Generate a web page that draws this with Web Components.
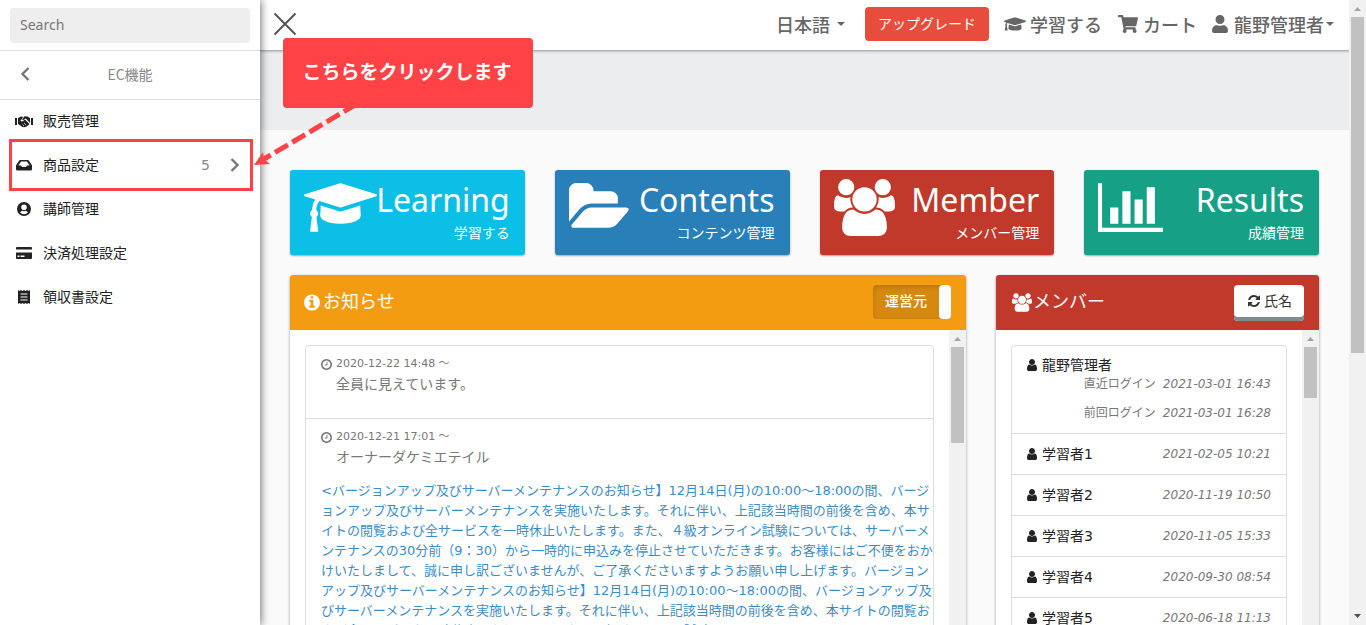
<!DOCTYPE html>
<html lang="ja">
<head>
<meta charset="UTF-8">
<meta name="viewport" content="width=device-width, initial-scale=1">
<title>EC機能</title>
<style>
  body {
    margin: 0;
    height: 100vh;
    overflow: hidden;
    background: #fafafa;
    color: #777;
    font-family: "DejaVu Sans", "Noto Sans CJK JP", sans-serif;
    font-size: 14px;
    line-height: 20px;
  }
</style>
</head>
<body>
<app-shell>
  <side-menu slot="side" heading="EC機能">
    <menu-entry icon="handshake">販売管理</menu-entry>
    <menu-entry icon="inbox" count="5" marked>商品設定</menu-entry>
    <menu-entry icon="account">講師管理</menu-entry>
    <menu-entry icon="card">決済処理設定</menu-entry>
    <menu-entry icon="receipt">領収書設定</menu-entry>
  </side-menu>

  <top-bar slot="top"></top-bar>

  <stat-card slot="cards" icon="cap4" color="#0cbfe6" heading="Learning">学習する</stat-card>
  <stat-card slot="cards" icon="folder" color="#2980b9" heading="Contents">コンテンツ管理</stat-card>
  <stat-card slot="cards" icon="users" color="#c0392b" heading="Member">メンバー管理</stat-card>
  <stat-card slot="cards" icon="chart" color="#16a085" heading="Results">成績管理</stat-card>

  <panel-box slot="news" icon="info" color="#f39c12" heading="お知らせ" thumb="96">
    <toggle-switch slot="action">運営元</toggle-switch>
    <notice-item date="2020-12-22 14:48 ～" heading="全員に見えています。"></notice-item>
    <notice-item date="2020-12-21 17:01 ～" heading="オーナーダケミエテイル">&lt;バージョンアップ及びサーバーメンテナンスのお知らせ】12月14日(月)の10:00～18:00の間、バージ<br>ョンアップ及びサーバーメンテナンスを実施いたします。それに伴い、上記該当時間の前後を含め、本サ<br>イトの閲覧および全サービスを一時休止いたします。また、４級オンライン試験については、サーバーメ<br>ンテナンスの30分前（9：30）から一時的に申込みを停止させていただきます。お客様にはご不便をおか<br>けいたしまして、誠に申し訳ございませんが、ご了承くださいますようお願い申し上げます。バージョン<br>アップ及びサーバーメンテナンスのお知らせ】12月14日(月)の10:00～18:00の間、バージョンアップ及<br>びサーバーメンテナンスを実施いたします。それに伴い、上記該当時間の前後を含め、本サイトの閲覧お<br>よび全サービスを一時休止いたします。また、４級オンライン試験については、サーバーメンテナンス</notice-item>
  </panel-box>

  <panel-box slot="members" icon="users" color="#c0392b" heading="メンバー" thumb="51">
    <sort-button slot="action">氏名</sort-button>
    <member-row name="龍野管理者" last="2021-03-01 16:43" previous="2021-03-01 16:28"></member-row>
    <member-row name="学習者1" last="2021-02-05 10:21"></member-row>
    <member-row name="学習者2" last="2020-11-19 10:50"></member-row>
    <member-row name="学習者3" last="2020-11-05 15:33"></member-row>
    <member-row name="学習者4" last="2020-09-30 08:54"></member-row>
    <member-row name="学習者5" last="2020-06-18 11:13"></member-row>
  </panel-box>

  <click-hint slot="hint">こちらをクリックします</click-hint>
</app-shell>

<script>
const ICONS = {
  cap4: ['0 0 2304 1792', '<path d="M1774 836l18 316q4 69-82 128t-235 93.5-323 34.5-323-34.5-235-93.5-82-128l18-316 574 181q22 7 48 7t48-7zm530-324q0 23-22 31l-1120 352q-4 1-10 1t-10-1l-652-206q-43 34-71 111.5t-34 178.5q63 36 63 109 0 69-58 107l58 433q2 14-8 25-9 11-24 11h-192q-15 0-24-11-10-11-8-25l58-433q-58-38-58-107 0-73 65-111 11-207 98-330l-333-104q-22-8-22-31t22-31l1120-352q4-1 10-1t10 1l1120 352q22 8 22 31z"/>'],
  folder: ['0 0 1920 1792', '<path d="M1879 952q0 31-31 66l-336 396q-43 51-120.5 86.5t-143.5 35.5h-1088q-34 0-60.5-13t-26.5-43q0-31 31-66l336-396q43-51 120.5-86.5t143.5-35.5h1088q34 0 60.5 13t26.5 43zm-343-344v160h-832q-94 0-197 47.5t-164 119.5l-337 396-5 6q0-4-.5-12.5t-.5-12.5v-960q0-92 66-158t158-66h320q92 0 158 66t66 158v32h544q92 0 158 66t66 158z"/>'],
  users: ['0 0 1920 1792', '<path d="M593 896q-162 5-265 128h-134q-82 0-138-40.5t-56-118.5q0-353 124-353 6 0 43.5 21t97.5 42.5 119 21.5q67 0 133-23-5 37-5 66 0 139 81 256zm1071 637q0 120-73 189.5t-194 69.5h-874q-121 0-194-69.5t-73-189.5q0-53 3.5-103.5t14-109 26.5-108.5 43-97.5 62-81 85.5-53.5 111.5-20q10 0 43 21.5t73 48 107 48 135 21.5 135-21.5 107-48 73-48 43-21.5q61 0 111.5 20t85.5 53.5 62 81 43 97.5 26.5 108.5 14 109 3.5 103.5zm-1024-1277q0 106-75 181t-181 75-181-75-75-181 75-181 181-75 181 75 75 181zm704 384q0 159-112.5 271.5t-271.5 112.5-271.5-112.5-112.5-271.5 112.5-271.5 271.5-112.5 271.5 112.5 112.5 271.5zm576 225q0 78-56 118.5t-138 40.5h-134q-103-123-265-128 81-117 81-256 0-29-5-66 66 23 133 23 59 0 119-21.5t97.5-42.5 43.5-21q124 0 124 353zm-128-609q0 106-75 181t-181 75-181-75-75-181 75-181 181-75 181 75 75 181z"/>'],
  chart: ['0 0 2048 1792', '<path d="M640 896v512h-256v-512h256zm384-512v1024h-256v-1024h256zm1024 1152v128h-2048v-1536h128v1408h1920zm-640-896v768h-256v-768h256zm384-384v1152h-256v-1152h256z"/>'],
  info: ['128 128 1536 1536', '<path d="M1152 1376v-160q0-14-9-23t-23-9h-96v-512q0-14-9-23t-23-9h-320q-14 0-23 9t-9 23v160q0 14 9 23t23 9h96v320h-96q-14 0-23 9t-9 23v160q0 14 9 23t23 9h448q14 0 23-9t9-23zm-128-896v-160q0-14-9-23t-23-9h-192q-14 0-23 9t-9 23v160q0 14 9 23t23 9h192q14 0 23-9t9-23zm640 416q0 209-103 385.5t-279.5 279.5-385.5 103-385.5-103-279.5-279.5-103-385.5 103-385.5 279.5-279.5 385.5-103 385.5 103 279.5 279.5 103 385.5z"/>'],
  clock: ['128 128 1536 1536', '<path d="M1024 544v448q0 14-9 23t-23 9h-320q-14 0-23-9t-9-23v-64q0-14 9-23t23-9h224v-352q0-14 9-23t23-9h64q14 0 23 9t9 23zm416 352q0-148-73-273t-198-198-273-73-273 73-198 198-73 273 73 273 198 198 273 73 273-73 198-198 73-273zm224 0q0 209-103 385.5t-279.5 279.5-385.5 103-385.5-103-279.5-279.5-103-385.5 103-385.5 279.5-279.5 385.5-103 385.5 103 279.5 279.5 103 385.5z"/>'],
  refresh: ['128 128 1536 1536', '<path d="M1639 1056q0 5-1 7-64 268-268 434.5t-478 166.5q-146 0-282.5-55t-243.5-157l-129 129q-19 19-45 19t-45-19-19-45v-448q0-26 19-45t45-19h448q26 0 45 19t19 45-19 45l-137 137q71 66 161 102t187 36q134 0 250-65t186-179q11-17 53-117 8-23 30-23h192q13 0 22.5 9.5t9.5 22.5zm25-800v448q0 26-19 45t-45 19h-448q-26 0-45-19t-19-45 19-45l138-138q-148-137-349-137-134 0-250 65t-186 179q-11 17-53 117-8 23-30 23h-199q-13 0-22.5-9.5t-9.5-22.5v-7q65-268 270-434.5t480-166.5q146 0 284 55.5t245 156.5l130-129q19-19 45-19t45 19 19 45z"/>'],
  person: ['256 128 1280 1536', '<path d="M1536 1399q0 109-62.5 187t-150.5 78h-854q-88 0-150.5-78t-62.5-187q0-85 8.5-160.5t31.5-152 58.5-131 94-89 134.5-34.5q131 128 313 128t313-128q76 0 134.5 34.5t94 89 58.5 131 31.5 152 8.5 160.5zm-256-887q0 159-112.5 271.5t-271.5 112.5-271.5-112.5-112.5-271.5 112.5-271.5 271.5-112.5 271.5 112.5 112.5 271.5z"/>'],
  user: ['0 0 448 512', '<path d="M224 256c70.7 0 128-57.3 128-128S294.7 0 224 0 96 57.3 96 128s57.3 128 128 128zm89.6 32h-16.7c-22.2 10.2-46.9 16-72.9 16s-50.6-5.8-72.9-16h-16.7C60.2 288 0 348.2 0 422.4V464c0 26.5 21.5 48 48 48h352c26.5 0 48-21.5 48-48v-41.6c0-74.2-60.2-134.4-134.4-134.4z"/>'],
  cart: ['0 0 576 512', '<path d="M528.12 301.319l47.273-208C578.806 78.301 567.391 64 551.99 64H159.208l-9.166-44.81C147.758 8.021 137.93 0 126.529 0H24C10.745 0 0 10.745 0 24v16c0 13.255 10.745 24 24 24h69.883l70.248 343.435C147.325 417.1 136 435.222 136 456c0 30.928 25.072 56 56 56s56-25.072 56-56c0-15.674-6.447-29.835-16.824-40h209.647C430.447 426.165 424 440.326 424 456c0 30.928 25.072 56 56 56s56-25.072 56-56c0-22.172-12.888-41.332-31.579-50.405l5.517-24.276c3.413-15.018-8.002-29.319-23.403-29.319H218.117l-6.545-32h293.145c11.206 0 20.92-7.754 23.403-18.681z"/>'],
  cap: ['0 0 640 512', '<path d="M622.34 153.2L343.4 67.5c-15.2-4.67-31.6-4.67-46.79 0L17.66 153.2c-23.54 7.23-23.54 38.36 0 45.59l48.63 14.94c-10.67 13.19-17.23 29.28-17.88 46.9C38.78 266.15 32 276.11 32 288c0 10.78 5.68 19.85 13.86 25.65L20.33 428.53C18.11 438.52 25.71 448 35.94 448h56.11c10.24 0 17.84-9.48 15.62-19.47L82.14 313.65C90.32 307.85 96 298.78 96 288c0-11.57-6.47-21.25-15.66-26.87.76-15.02 8.44-28.3 20.69-36.72L296.6 284.5c9.06 2.78 26.44 6.25 46.79 0l278.95-85.7c23.55-7.24 23.55-38.36 0-45.6zM352.79 315.09c-28.53 8.76-52.84 3.92-65.59 0l-145.02-44.55L128 384c0 35.35 85.96 64 192 64s192-28.65 192-64l-14.18-113.47-145.03 44.56z"/>'],
  handshake: ['0 0 18 14', '<path d="M0 4h2v7H0zM16 4h2v7h-2zM3 4l3-1.5 2.5.5-3 3.500q.8 1.700 3 .2L10 5.500l4.500 4.500-1.500 1.500-1.500 1-2 .8-2-.3L3 10z"/><path d="M9.500 2.200l3 .2L15 4v5l-4.200-4.500L8 6.200l-1-.2zM11 8.500l2 2"/><path d="M9 9l2 2M7.500 10.500l1.500 1.500" stroke="#fff" stroke-width=".7"/>'],
  inbox: ['0 0 16 14', '<path fill-rule="evenodd" d="M4.500 2h7q1 0 1.500.8L16 7.500V11q0 1.500-1.500 1.500h-13Q0 12.500 0 11V7.500l3-4.700Q3.500 2 4.500 2zM5 3.500L2.500 7.500H5l1 1.500h4l1-1.500h2.500L11 3.500z"/>'],
  account: ['0 0 14 14', '<path fill-rule="evenodd" d="M7 0a7 7 0 1 0 0 14A7 7 0 1 0 7 0zM7 2.500a2.800 2.800 0 1 1 0 5.600 2.800 2.800 0 0 1 0-5.600zM3 10.300q1.500-1.500 2.500-1.500 1.500.7 3 0 1 0 2.500 1.500-1.500 2-4 2t-4-2z"/>'],
  card: ['0 0 16 14', '<path fill-rule="evenodd" d="M1 1h14q1 0 1 1v1.500H0V2q0-1 1-1zM0 6.500h16V12q0 1-1 1H1q-1 0-1-1zM1.500 9.500V11h2V9.500zM4.500 9.500V11h4V9.500z"/>'],
  receipt: ['0 0 12 14', '<path fill-rule="evenodd" d="M0 0l1.500 1L3 0l1.500 1L6 0l1.500 1L9 0l1.500 1L12 0v14l-1.500-1L9 14l-1.500-1L6 14l-1.500-1L3 14l-1.500-1L0 14zM2.500 3.500v1h7v-1zM2.500 6.500v1h7v-1zM2.500 9.500v1h7v-1z"/>'],
  left: ['0 0 10 16', '<path d="M8.500 2l-6 6 6 6" fill="none" stroke="currentColor" stroke-width="2.400"/>'],
  right: ['0 0 10 16', '<path d="M1.500 2l6 6-6 6" fill="none" stroke="currentColor" stroke-width="2.400"/>'],
  close: ['0 0 24 24', '<path d="M1.500 1.500l21 21M22.500 1.500l-21 21" fill="none" stroke="currentColor" stroke-width="2"/>'],
  caret: ['0 0 8 4', '<path d="M0 0h8L4 4z"/>']
};

class AppIcon extends HTMLElement {
  constructor() {
    super();
    this.attachShadow({ mode: 'open' });
  }

  connectedCallback() {
    const [box, shape] = ICONS[this.getAttribute('name')];
    this.shadowRoot.innerHTML = `
      <style>
        :host { display: inline-flex; flex: none; width: 14px; height: 14px; }
        svg { width: 100%; height: 100%; fill: currentColor; }
      </style>
      <svg viewBox="${box}" aria-hidden="true">${shape}</svg>
    `;
  }
}
customElements.define('app-icon', AppIcon);

class ScrollTrack extends HTMLElement {
  constructor() {
    super();
    this.attachShadow({ mode: 'open' });
  }

  connectedCallback() {
    this.shadowRoot.innerHTML = `
      <style>
        :host {
          display: flex;
          flex-direction: column;
          align-items: center;
          flex: none;
          width: 17px;
          background: #f1f1f1;
        }
        svg { flex: none; width: 17px; height: 17px; fill: #a3a3a3; }
        .thumb { width: 13px; height: ${this.getAttribute('thumb')}px; background: #c1c1c1; }
        .down { margin-top: auto; fill: #505050; }
      </style>
      <svg viewBox="0 0 17 17"><path d="M5 11h7L8.500 7z"/></svg>
      <div class="thumb"></div>
      <svg class="down" viewBox="0 0 17 17"><path d="M5 6h7l-3.500 4z"/></svg>
    `;
  }
}
customElements.define('scroll-track', ScrollTrack);

class AppShell extends HTMLElement {
  constructor() {
    super();
    this.attachShadow({ mode: 'open' });
    this.shadowRoot.innerHTML = `
      <style>
        :host { display: flex; height: 100vh; position: relative; }
        .side { flex: none; width: 260px; z-index: 2; box-shadow: 1px 0 8px rgba(0,0,0,.55); }
        .page { flex: 1; min-width: 0; overflow: hidden; }
        .band { height: 79px; background: #ebedee; }
        .grid { padding: 40px 15px 0; }
        .cards { display: grid; grid-template-columns: repeat(4, 1fr); }
        .cards ::slotted(*) { margin: 0 15px; }
        .panels { display: grid; grid-template-columns: 2fr 1fr; margin-top: 20px; }
        .panels ::slotted(*) { margin: 0 15px; min-width: 0; }
      </style>
      <div class="side"><slot name="side"></slot></div>
      <main class="page">
        <slot name="top"></slot>
        <div class="band"></div>
        <div class="grid">
          <div class="cards"><slot name="cards"></slot></div>
          <div class="panels">
            <slot name="news"></slot>
            <slot name="members"></slot>
          </div>
        </div>
      </main>
      <scroll-track thumb="336"></scroll-track>
      <slot name="hint"></slot>
    `;
  }
}
customElements.define('app-shell', AppShell);

class SideMenu extends HTMLElement {
  constructor() {
    super();
    this.attachShadow({ mode: 'open' });
  }

  connectedCallback() {
    this.shadowRoot.innerHTML = `
      <style>
        :host { display: block; height: 100%; background: #fff; }
        .search { padding: 8px 10px 7px; border-bottom: 1px solid #dcdfe0; }
        input {
          display: block;
          box-sizing: border-box;
          width: 100%;
          height: 35px;
          padding: 0 10px 2px;
          border: 0;
          border-radius: 4px;
          background: #eee;
          font: 14px "Noto Sans", sans-serif;
        }
        input::placeholder { color: #777; opacity: 1; }
        .title {
          display: grid;
          grid-template-columns: 50px 1fr 50px;
          align-items: center;
          height: 46px;
          padding-bottom: 2px;
          border-bottom: 1px solid #dcdfe0;
          text-align: center;
          font-family: "Noto Sans CJK JP", sans-serif;
          color: #888;
        }
        button { border: 0; padding: 0; background: none; color: #777; line-height: 0; }
        app-icon { width: 10px; height: 16px; }
        nav { margin-top: -1px; }
      </style>
      <div class="search"><input type="search" placeholder="Search" aria-label="Search"></div>
      <div class="title">
        <button aria-label="戻る"><app-icon name="left"></app-icon></button>
        <span>${this.getAttribute('heading')}</span>
      </div>
      <nav><slot></slot></nav>
    `;
  }
}
customElements.define('side-menu', SideMenu);

class MenuEntry extends HTMLElement {
  constructor() {
    super();
    this.attachShadow({ mode: 'open' });
  }

  connectedCallback() {
    const count = this.getAttribute('count');
    this.shadowRoot.innerHTML = `
      <style>
        :host { display: block; position: relative; }
        a {
          display: flex;
          align-items: center;
          height: 44px;
          padding: 0 20px 0 15px;
          color: #222;
          text-decoration: none;
        }
        .icon { width: 18px; margin-right: 10px; }
        .count { margin-left: auto; margin-right: 20px; color: #888; }
        .next { width: 10px; height: 16px; color: #777; }
        .mark { position: absolute; inset: -4px 7px -4px 9px; border: 3px solid #ff4245; }
      </style>
      <a href="#">
        <app-icon class="icon" name="${this.getAttribute('icon')}"></app-icon>
        <slot></slot>
        ${count ? `<span class="count">${count}</span><app-icon class="next" name="right"></app-icon>` : ''}
      </a>
      ${this.hasAttribute('marked') ? '<div class="mark"></div>' : ''}
    `;
  }
}
customElements.define('menu-entry', MenuEntry);

class TopBar extends HTMLElement {
  constructor() {
    super();
    this.attachShadow({ mode: 'open' });
    this.shadowRoot.innerHTML = `
      <style>
        :host {
          display: flex;
          align-items: center;
          box-sizing: border-box;
          height: 51px;
          padding: 0 15px 2px 13px;
          position: relative;
          border-bottom: 1px solid #b0b2b3;
          box-shadow: 0 1px 2px rgba(0,0,0,.2);
          background: #fff;
          color: #666;
          font-family: "Noto Sans CJK JP", sans-serif;
          font-size: 18px;
          font-weight: 500;
          white-space: nowrap;
        }
        .close { margin-right: auto; line-height: 0; color: #555; }
        .close app-icon { width: 24px; height: 24px; }
        button, select {
          appearance: none;
          border: 0;
          padding: 0;
          background: none;
          color: inherit;
          font: inherit;
        }
        a, .lang, .account { display: flex; align-items: center; color: inherit; text-decoration: none; }
        .lang { gap: 7px; margin-right: 20px; }
        .caret { width: 8px; height: 4px; }
        .upgrade {
          width: 124px;
          height: 34px;
          padding-bottom: 2px;
          margin-right: 15px;
          border-radius: 4px;
          background: #e74c3c;
          color: #fff;
          font-size: 14px;
          font-weight: 400;
        }
        .cap { width: 22px; height: 18px; margin-right: 4px; }
        .cart { width: 20px; height: 18px; margin: 0 5px 0 16px; }
        .user { width: 16px; height: 18px; margin: 0 6px 0 15px; }
        .account .caret { margin-left: 2px; }
      </style>
      <button class="close" aria-label="閉じる"><app-icon name="close"></app-icon></button>
      <label class="lang"><select aria-label="言語"><option>日本語</option></select><app-icon class="caret" name="caret"></app-icon></label>
      <button class="upgrade">アップグレード</button>
      <a href="#"><app-icon class="cap" name="cap"></app-icon>学習する</a>
      <a href="#"><app-icon class="cart" name="cart"></app-icon>カート</a>
      <button class="account"><app-icon class="user" name="user"></app-icon>龍野管理者<app-icon class="caret" name="caret"></app-icon></button>
    `;
  }
}
customElements.define('top-bar', TopBar);

class StatCard extends HTMLElement {
  constructor() {
    super();
    this.attachShadow({ mode: 'open' });
  }

  connectedCallback() {
    const icon = this.getAttribute('icon');
    // glyph widths at 57px height
    const widths = { cap4: 73, folder: 61, users: 61, chart: 65 };
    this.shadowRoot.innerHTML = `
      <style>
        :host { display: block; }
        a {
          display: flex;
          justify-content: space-between;
          height: 85px;
          box-sizing: border-box;
          padding: 9px 15px 0 14px;
          border-radius: 3px;
          box-shadow: 0 1px 2px rgba(0,0,0,.35);
          background: ${this.getAttribute('color')};
          color: #fff;
          text-decoration: none;
        }
        app-icon { width: ${widths[icon]}px; height: 57px; }
        .text { flex: 1; width: 0; display: flex; flex-direction: column; align-items: flex-end; white-space: nowrap; }
        .heading { font: 32px/42px "Noto Sans", sans-serif; }
        .label { line-height: 24px; }
      </style>
      <a href="#">
        <app-icon name="${icon}"></app-icon>
        <div class="text">
          <span class="heading">${this.getAttribute('heading')}</span>
          <span class="label"><slot></slot></span>
        </div>
      </a>
    `;
  }
}
customElements.define('stat-card', StatCard);

class PanelBox extends HTMLElement {
  constructor() {
    super();
    this.attachShadow({ mode: 'open' });
  }

  connectedCallback() {
    const icon = this.getAttribute('icon');
    this.shadowRoot.innerHTML = `
      <style>
        :host {
          display: block;
          border-radius: 3px;
          box-shadow: 0 1px 3px rgba(0,0,0,.4);
          background: #fff;
        }
        header {
          display: flex;
          align-items: flex-start;
          justify-content: space-between;
          height: 45px;
          padding: 10px 15px 0 14px;
          border-radius: 3px 3px 0 0;
          background: ${this.getAttribute('color')};
          color: #fff;
        }
        h2 {
          display: flex;
          align-items: center;
          gap: 3px;
          height: 34px;
          margin: 0;
          font-size: 18px;
          font-weight: 400;
        }
        h2 app-icon { width: 16px; height: 19px; }
        h2 app-icon[name="users"] { width: 20px; padding-left: 2px; margin-right: -2px; }
        .body { display: flex; height: 400px; }
        .list {
          flex: 1;
          min-width: 0;
          overflow: hidden;
          margin: 15px 15px 0;
          border: 1px solid #ddd;
          border-radius: 4px 4px 0 0;
        }
      </style>
      <header>
        <h2><app-icon name="${icon}"></app-icon>${this.getAttribute('heading')}</h2>
        <slot name="action"></slot>
      </header>
      <div class="body">
        <div class="list"><slot></slot></div>
        <scroll-track thumb="${this.getAttribute('thumb')}"></scroll-track>
      </div>
    `;
  }
}
customElements.define('panel-box', PanelBox);

class ToggleSwitch extends HTMLElement {
  constructor() {
    super();
    this.attachShadow({ mode: 'open' });
    this.shadowRoot.innerHTML = `
      <style>
        :host { display: block; }
        label {
          display: flex;
          width: 78px;
          height: 34px;
          border-radius: 4px;
          box-shadow: inset 0 2px 5px rgba(0,0,0,.15);
          background: #d68910;
          font-weight: 500;
          font-family: "Noto Sans CJK JP", sans-serif;
          line-height: 30px;
        }
        span { flex: 1; text-align: center; }
        input { appearance: none; width: 12px; height: 34px; margin: 0; border-radius: 4px; background: #fff; }
      </style>
      <label><span><slot></slot></span><input type="checkbox" checked></label>
    `;
  }
}
customElements.define('toggle-switch', ToggleSwitch);

class SortButton extends HTMLElement {
  constructor() {
    super();
    this.attachShadow({ mode: 'open' });
    this.shadowRoot.innerHTML = `
      <style>
        :host { display: block; }
        button {
          display: flex;
          align-items: center;
          justify-content: center;
          gap: 4px;
          width: 70px;
          height: 36px;
          padding: 0 0 1px 2px;
          border: 0;
          border-radius: 4px;
          box-shadow: inset 0 -4px #7f8c8d;
          padding-bottom: 4px;
          background: #fff;
          color: #333;
          font: inherit;
        }
        app-icon { width: 12px; height: 12px; }
      </style>
      <button><app-icon name="refresh"></app-icon><slot></slot></button>
    `;
  }
}
customElements.define('sort-button', SortButton);

class NoticeItem extends HTMLElement {
  constructor() {
    super();
    this.attachShadow({ mode: 'open' });
  }

  connectedCallback() {
    this.shadowRoot.innerHTML = `
      <style>
        :host { display: block; padding: 8px 0 14px 15px; border-bottom: 1px solid #ddd; }
        .date { display: flex; align-items: center; gap: 4px; font-size: 11px; }
        app-icon { width: 11px; height: 11px; }
        .heading { margin: 0 0 10px 15px; }
        .body { margin-top: 14px; color: #3c8dc5; font-size: 13px; white-space: nowrap; }
      </style>
      <div class="date"><app-icon name="clock"></app-icon>${this.getAttribute('date')}</div>
      <div class="heading">${this.getAttribute('heading')}</div>
      ${this.childNodes.length ? '<div class="body"><slot></slot></div>' : ''}
    `;
  }
}
customElements.define('notice-item', NoticeItem);

class MemberRow extends HTMLElement {
  constructor() {
    super();
    this.attachShadow({ mode: 'open' });
  }

  connectedCallback() {
    const last = this.getAttribute('last');
    const previous = this.getAttribute('previous');
    this.shadowRoot.innerHTML = `
      <style>
        :host { display: block; padding: 10px 15px; border-bottom: 1px solid #ddd; }
        .row { display: flex; align-items: center; justify-content: space-between; }
        .name { display: flex; align-items: center; gap: 5px; color: #222; }
        app-icon { width: 10px; height: 12px; }
        .time { display: flex; justify-content: flex-end; gap: 7px; font-size: 12px; }
        .time + .time { margin-top: 9px; }
        .stack { line-height: 18px; }
        .stack .time { line-height: 20px; }
      </style>
      ${previous ? `
        <div class="stack">
          <div class="name"><app-icon name="person"></app-icon>${this.getAttribute('name')}</div>
          <div class="time"><span>直近ログイン</span><i>${last}</i></div>
          <div class="time"><span>前回ログイン</span><i>${previous}</i></div>
        </div>` : `
        <div class="row">
          <div class="name"><app-icon name="person"></app-icon>${this.getAttribute('name')}</div>
          <div class="time"><i>${last}</i></div>
        </div>`}
    `;
  }
}
customElements.define('member-row', MemberRow);

class ClickHint extends HTMLElement {
  constructor() {
    super();
    this.attachShadow({ mode: 'open' });
    this.shadowRoot.innerHTML = `
      <style>
        :host { position: absolute; left: 254px; top: 38px; z-index: 3; }
        .box {
          box-sizing: border-box;
          width: 250px;
          height: 70px;
          margin-left: 29px;
          padding-right: 2px;
          border-radius: 4px;
          background: #ff4245;
          color: #fff;
          font: bold 19px/66px "Noto Sans CJK JP", sans-serif;
          text-align: center;
          white-space: nowrap;
        }
        svg { display: block; width: 110px; height: 60px; }
      </style>
      <div class="box"><slot></slot></div>
      <svg viewBox="0 0 110 60"><path d="M101-3L10 51" stroke="#ff4245" stroke-width="5" stroke-dasharray="15 5" stroke-dashoffset="2"/><path d="M0 57l9-13 1 7 6 5z" fill="#ff4245"/></svg>
    `;
  }
}
customElements.define('click-hint', ClickHint);
</script>
</body>
</html>
